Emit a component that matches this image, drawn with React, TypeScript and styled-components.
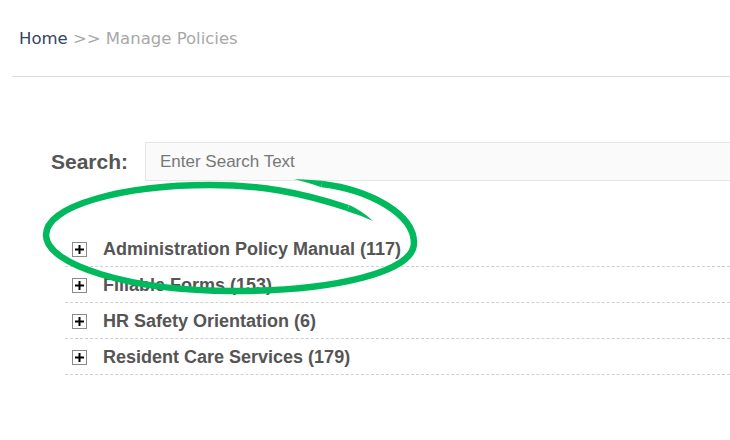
import React from 'react';
import styled, { createGlobalStyle } from 'styled-components';

const GlobalStyle = createGlobalStyle`
  html, body {
    margin: 0;
    padding: 0;
    background: #ffffff;
  }
  body {
    width: 730px;
    height: 440px;
    overflow: hidden;
  }
`;

const categories = [
  { name: 'Administration Policy Manual', count: 117 },
  { name: 'Fillable Forms', count: 153 },
  { name: 'HR Safety Orientation', count: 6 },
  { name: 'Resident Care Services', count: 179 },
];

const App: React.FC = (): JSX.Element => {
  return (
    <Page>
      <GlobalStyle />
      <Header>
        <Crumbs>
          <CrumbLink href="#">Home</CrumbLink>
          <CrumbCurrent> &gt;&gt; Manage Policies</CrumbCurrent>
        </Crumbs>
      </Header>

      <SearchRow>
        <SearchLabel htmlFor="search">Search:</SearchLabel>
        <SearchInput id="search" type="text" placeholder="Enter Search Text" />
      </SearchRow>

      <CategoryList>
        {categories.map((c) => (
          <CategoryRow key={c.name}>
            <ExpandBox>
              <PlusIcon viewBox="0 0 9 9">
                <path d="M4.5 0v9M0 4.5h9" />
              </PlusIcon>
            </ExpandBox>
            <CategoryName>
              {c.name} ({c.count})
            </CategoryName>
          </CategoryRow>
        ))}
      </CategoryList>

      {/* hand-drawn highlight round the first category */}
      <Annotation viewBox="0 0 730 440">
        <path
          d="M322 184 C370 190 414 214 414 243 C414 272 335 291 233 291 C130 291 46 265 46 235 C46 205 125 185 210 185 C260 185 300 192 348 208"
          fill="none"
          stroke="#00b95c"
          strokeWidth={6.5}
        />
        {/* pen start and end, tapered */}
        <path d="M294 179 Q308 179.6 322.6 180.8 L321.4 187.2 Q306 182 294 179 Z" fill="#00b95c" />
        <path d="M349.5 205.1 Q362 211 373 221 Q360 215 346.5 210.9 Z" fill="#00b95c" />
      </Annotation>
    </Page>
  );
};

const Page = styled.div`
  position: relative;
  width: 730px;
  height: 440px;
  overflow: hidden;
  font-family: 'Liberation Sans', Arial, sans-serif;
`;

const Header = styled.div`
  margin-left: 12px;
  height: 77px;
  border-bottom: 1px solid #dcdcdc;
  box-sizing: border-box;
  padding: 29px 0 0 7px;
`;

const Crumbs = styled.div`
  font-family: 'DejaVu Sans', Verdana, sans-serif;
  font-size: 16.5px;
  line-height: 20px;
`;

const CrumbLink = styled.a`
  color: #34455e;
  text-decoration: none;
`;

const CrumbCurrent = styled.span`
  color: #a8a8a8;
`;

const SearchRow = styled.div`
  display: flex;
  align-items: center;
  margin-top: 65px;
  padding-left: 51px;
`;

const SearchLabel = styled.label`
  flex-shrink: 0;
  width: 94px;
  font-size: 21px;
  font-weight: bold;
  color: #555555;
`;

const SearchInput = styled.input`
  flex-shrink: 0;
  width: 640px;
  height: 39px;
  box-sizing: border-box;
  border: 1px solid #e6e6e6;
  background: #fafafa;
  padding: 0 14px;
  font-family: 'Liberation Sans', Arial, sans-serif;
  font-size: 17px;
  color: #333333;
  outline: none;

  &::placeholder {
    color: #777777;
  }
`;

const CategoryList = styled.div`
  margin-top: 50px;
  margin-left: 65px;
`;

const CategoryRow = styled.div`
  display: flex;
  align-items: center;
  height: 36px;
  box-sizing: border-box;
  padding: 2px 0 0 7px;
  border-bottom: 1px dashed #d0d0d0;
`;

const ExpandBox = styled.span`
  flex-shrink: 0;
  display: flex;
  align-items: center;
  justify-content: center;
  width: 15px;
  height: 15px;
  box-sizing: border-box;
  border: 1px solid #8a8a8a;
  background: #ffffff;
  margin-right: 16px;
`;

const PlusIcon = styled.svg`
  width: 9px;
  height: 9px;
  stroke: #000000;
  stroke-width: 2;
  fill: none;
`;

const CategoryName = styled.span`
  font-size: 18px;
  font-weight: bold;
  color: #555555;
`;

const Annotation = styled.svg`
  position: absolute;
  left: 0;
  top: 0;
  width: 730px;
  height: 440px;
  pointer-events: none;
`;

export default App;
